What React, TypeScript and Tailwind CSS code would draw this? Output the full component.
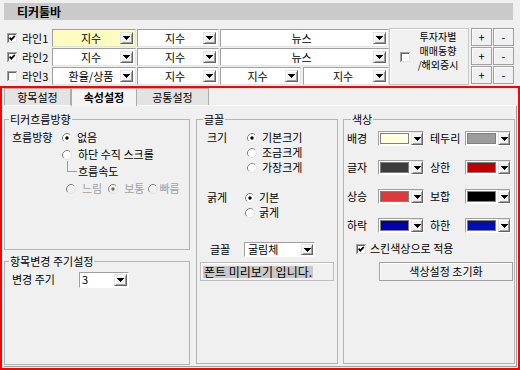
import React from "react";

const Arrow = () => (
  <svg width="7" height="4" viewBox="0 0 7 4" shapeRendering="crispEdges">
    <path d="M0 0h7v1h-1v1h-1v1h-1v1h-1v-1h-1v-1h-1v-1h-1z" fill="#000" />
  </svg>
);

const DropBtn = ({ w }: { w: string }) => (
  <div className={`${w} h-full shrink-0 flex items-center justify-center bg-[#f0f0f0] border border-t-[#e3e3e3] border-l-[#e3e3e3] border-r-[#646464] border-b-[#646464] shadow-[inset_1px_1px_0_#fff,inset_-1px_-1px_0_#a0a0a0]`}>
    <Arrow />
  </div>
);

const Check = ({ on }: { on?: boolean }) => (
  <svg width="10" height="10" viewBox="0 0 10 10" className="shrink-0">
    <rect width="10" height="10" fill="#fff" />
    <path d="M0 0h10v1H1v9H0z" fill="#a0a0a0" shapeRendering="crispEdges" />
    <path d="M1 1h8v1H2v8H1z" fill="#696969" shapeRendering="crispEdges" />
    <path d="M9 1h1v9H1V9h8z" fill="#e3e3e3" shapeRendering="crispEdges" />
    {on && <polyline points="2.6,4.6 4.3,6.6 7.8,2.8" fill="none" stroke="#000" strokeWidth="1.7" />}
  </svg>
);

const Radio = ({ on, off, className = "" }: { on?: boolean; off?: boolean; className?: string }) => (
  <svg width="10" height="10" viewBox="0 0 10 10" className={`shrink-0 ${className}`}>
    <circle cx="5" cy="5" r="4.5" fill={off ? "#f0f0f0" : "#fff"} />
    <path d="M1.82 8.18A4.5 4.5 0 0 1 8.18 1.82" fill="none" stroke="#808080" />
    <path d="M8.18 1.82A4.5 4.5 0 0 1 1.82 8.18" fill="none" stroke="#e3e3e3" />
    {on && <circle cx="5" cy="5" r="1.7" fill={off ? "#6d6d6d" : "#000"} />}
  </svg>
);

const Combo = ({ text, w, yellow }: { text: string; w: string; yellow?: boolean }) => (
  <div className={`${w} h-[18px] flex border border-t-[#a0a0a0] border-l-[#a0a0a0] border-r-[#e3e3e3] border-b-[#e3e3e3] p-[2px] ${yellow ? "bg-[#fdfcc0]" : "bg-white"}`}>
    <div className="flex-1 flex items-center justify-center pl-[7px] leading-none">{text}</div>
    <DropBtn w="w-[13px]" />
  </div>
);

const Swatch = ({ fill }: { fill: string }) => (
  <div className="w-[46px] h-[15px] flex bg-white border border-t-[#a0a0a0] border-l-[#a0a0a0] border-r-white border-b-white">
    <div className={`flex-1 ml-[1px] mr-[2px] my-[1px] border border-[#808080] ${fill}`} />
    <DropBtn w="w-[12px]" />
  </div>
);

const Row = ({ label, on, children }: { label: string; on?: boolean; children: React.ReactNode }) => (
  <div className="h-[18px] flex items-center">
    <Check on={on} />
    <span className="ml-[5px] w-[30px]">{label}</span>
    <div className="flex gap-[1px]">{children}</div>
  </div>
);

const PlusMinus = ({ t }: { t: string }) => (
  <div className="w-[21px] h-[18px] flex items-center justify-center bg-[#f0f0f0] border border-[#a0a0a0] shadow-[inset_1px_1px_0_#fff] leading-none">{t}</div>
);

const Group = ({ title, w, h, lm, children }: { title: string; w: string; h: string; lm: string; children: React.ReactNode }) => (
  <fieldset className={`${w} ${h} border border-[#b4b4b4] shrink-0`}>
    <legend className={`${lm} px-[1px] leading-[13px]`}>{title}</legend>
    {children}
  </fieldset>
);

const colors = [
  ["배경", "bg-[#ffffe0]", "테두리", "bg-[#9c9c9c]"],
  ["글자", "bg-[#3c3c3c]", "상한", "bg-[#c00000]"],
  ["상승", "bg-[#de3a3a]", "보합", "bg-[#000000]"],
  ["하락", "bg-[#0000a8]", "하한", "bg-[#0010b0]"],
];

export default function App() {
  return (
    <div className="w-[520px] h-[370px] overflow-hidden bg-[#f0f0f0] text-black text-[11px] leading-[13px] font-['Noto_Sans_CJK_KR','Noto_Sans',sans-serif]">
      <div className="pt-[3px] pl-[4px]">
        <div className="w-[509px] h-[17px] bg-[#cacaca] flex items-center pl-[13px] text-[12px] font-bold">티커툴바</div>
      </div>

      <div className="mt-[8px] h-[57px] flex">
        <div className="pl-[7px] pt-[1px] flex flex-col gap-[1px]">
          <Row label="라인1" on>
            <Combo text="지수" w="w-[84px]" yellow />
            <Combo text="지수" w="w-[82px]" />
            <Combo text="뉴스" w="w-[169px]" />
          </Row>
          <Row label="라인2" on>
            <Combo text="지수" w="w-[84px]" />
            <Combo text="지수" w="w-[82px]" />
            <Combo text="뉴스" w="w-[169px]" />
          </Row>
          <Row label="라인3">
            <Combo text="환율/상품" w="w-[84px]" />
            <Combo text="지수" w="w-[82px]" />
            <div className="flex gap-[2px]">
              <Combo text="지수" w="w-[81px]" />
              <Combo text="지수" w="w-[86px]" />
            </div>
          </Row>
        </div>

        <div className="w-[80px] h-full flex items-start border border-[#c6c6c6] shadow-[inset_1px_1px_0_#fff] pl-[10px]">
          <div className="mt-[23px]">
            <Check />
          </div>
          <div className="ml-[3px] mt-[1px] w-[50px] flex flex-col items-center text-[10px]">
            <span className="h-[14px] leading-[14px]">투자자별</span>
            <span className="h-[14px] leading-[14px]">매매동향</span>
            <span className="h-[14px] leading-[14px]">/해외증시</span>
          </div>
        </div>

        <div className="ml-[2px] grid grid-cols-[21px_21px] gap-[1px] content-start">
          <PlusMinus t="+" />
          <PlusMinus t="-" />
          <PlusMinus t="+" />
          <PlusMinus t="-" />
          <PlusMinus t="+" />
          <PlusMinus t="-" />
        </div>
      </div>

      <div className="mt-[1px] w-[520px] h-[284px] border-2 border-[#ff0000]">
        <div className="flex items-end h-[17px] pl-[2px]">
          <div className="w-[67px] h-[17px] flex items-center justify-center bg-[#e3e3e3] border border-b-0 border-[#acacac]">항목설정</div>
          <div className="w-[66px] h-[18px] -mb-[1px] relative z-[1] flex items-center justify-center bg-[#f4f4f4] border border-b-0 border-[#acacac] font-bold">속성설정</div>
          <div className="w-[72px] h-[17px] flex items-center justify-center bg-[#e3e3e3] border border-b-0 border-l-0 border-[#acacac]">공통설정</div>
        </div>

        <div className="ml-[1px] w-[514px] h-[262px] border border-t-white border-l-white border-r-[#a0a0a0] border-b-[#a0a0a0] flex pt-[7px]">
          <div className="w-[186px] flex flex-col shrink-0">
            <Group title="티커흐름방향" w="w-[186px]" h="h-[137px]" lm="ml-[4px]">
              <div className="pt-[3px] flex flex-col">
                <div className="h-[17px] flex items-center pl-[7px]">
                  <span className="w-[50px]">흐름방향</span>
                  <Radio on />
                  <span className="ml-[5px]">없음</span>
                </div>
                <div className="h-[17px] flex items-center pl-[57px]">
                  <Radio />
                  <span className="ml-[6px]">하단 수직 스크롤</span>
                </div>
                <div className="h-[17px] flex items-center pl-[62px]">
                  <div className="self-start -mt-[2px] w-[10px] h-[11px] border-l border-b border-[#a0a0a0]" />
                  <span className="ml-[1px]">흐름속도</span>
                </div>
                <div className="h-[17px] flex items-center pl-[61px] text-[#a0a0a0]">
                  <Radio off />
                  <span className="ml-[6px]">느림</span>
                  <Radio on off className="ml-[6px]" />
                  <span className="ml-[6px]">보통</span>
                  <Radio off className="ml-[3px]" />
                  <span className="ml-[2px]">빠름</span>
                </div>
              </div>
            </Group>
            <div className="mt-[5px]">
              <Group title="항목변경 주기설정" w="w-[186px]" h="h-[110px]" lm="ml-[4px]">
                <div className="pt-[2px] h-[21px] flex items-center pl-[7px]">
                  <span className="w-[67px]">변경 주기</span>
                  <div className="w-[50px] h-[16px] flex bg-white border border-t-[#a0a0a0] border-l-[#a0a0a0] border-r-white border-b-white p-[1px]">
                    <div className="flex-1 flex items-center pl-[1px] leading-none">3</div>
                    <DropBtn w="w-[13px]" />
                  </div>
                </div>
              </Group>
            </div>
          </div>

          <div className="ml-[6px]">
            <Group title="글꼴" w="w-[142px]" h="h-[251px]" lm="ml-[6px]">
              <div className="flex flex-col">
                <div className="mt-[4px] flex pl-[10px]">
                  <span className="w-[40px] h-[15px] flex items-center">크기</span>
                  <div className="flex flex-col">
                    {["기본크기", "조금크게", "가장크게"].map((t, i) => (
                      <div key={t} className="h-[15px] flex items-center">
                        <Radio on={i === 0} />
                        <span className="ml-[5px]">{t}</span>
                      </div>
                    ))}
                  </div>
                </div>
                <div className="mt-[15px] flex pl-[10px]">
                  <span className="w-[38px] h-[15px] flex items-center">굵게</span>
                  <div className="flex flex-col">
                    {["기본", "굵게"].map((t, i) => (
                      <div key={t} className="h-[15px] flex items-center">
                        <Radio on={i === 0} />
                        <span className="ml-[4px]">{t}</span>
                      </div>
                    ))}
                  </div>
                </div>
                <div className="mt-[22px] flex items-center pl-[13px]">
                  <span className="w-[34px]">글꼴</span>
                  <div className="w-[71px] h-[15px] flex bg-white border border-t-[#a0a0a0] border-l-[#a0a0a0] border-r-white border-b-white p-[1px]">
                    <div className="flex-1 flex items-center pl-[2px] leading-none">굴림체</div>
                    <DropBtn w="w-[12px]" />
                  </div>
                </div>
                <div className="mt-[5px] ml-[3px] w-[134px] h-[19px] flex items-center pl-[2px] border border-[#bdbdbd] shadow-[inset_1px_1px_0_#fff]">
                  <span className="bg-[#c8c8c8] text-[12px] leading-[12px] px-[1px]">폰트 미리보기 입니다.</span>
                </div>
              </div>
            </Group>
          </div>

          <div className="ml-[5px]">
            <Group title="색상" w="w-[172px]" h="h-[251px]" lm="ml-[7px]">
              <div className="mt-[5px] flex flex-col gap-[14px] pl-[3px]">
                {colors.map(([a, ca, b, cb]) => (
                  <div key={a} className="h-[15px] flex items-center">
                    <span className="w-[31px]">{a}</span>
                    <Swatch fill={ca} />
                    <span className="ml-[6px] w-[35px]">{b}</span>
                    <Swatch fill={cb} />
                  </div>
                ))}
              </div>
              <div className="mt-[9px] h-[13px] flex items-center pl-[12px]">
                <Check on />
                <span className="ml-[4px]">스킨색상으로 적용</span>
              </div>
              <div className="mt-[7px] ml-[35px] w-[134px] h-[19px] flex items-center justify-center bg-[#f0f0f0] border border-[#a0a0a0] shadow-[inset_1px_1px_0_#fff]">
                색상설정 초기화
              </div>
            </Group>
          </div>
        </div>
      </div>
    </div>
  );
}
